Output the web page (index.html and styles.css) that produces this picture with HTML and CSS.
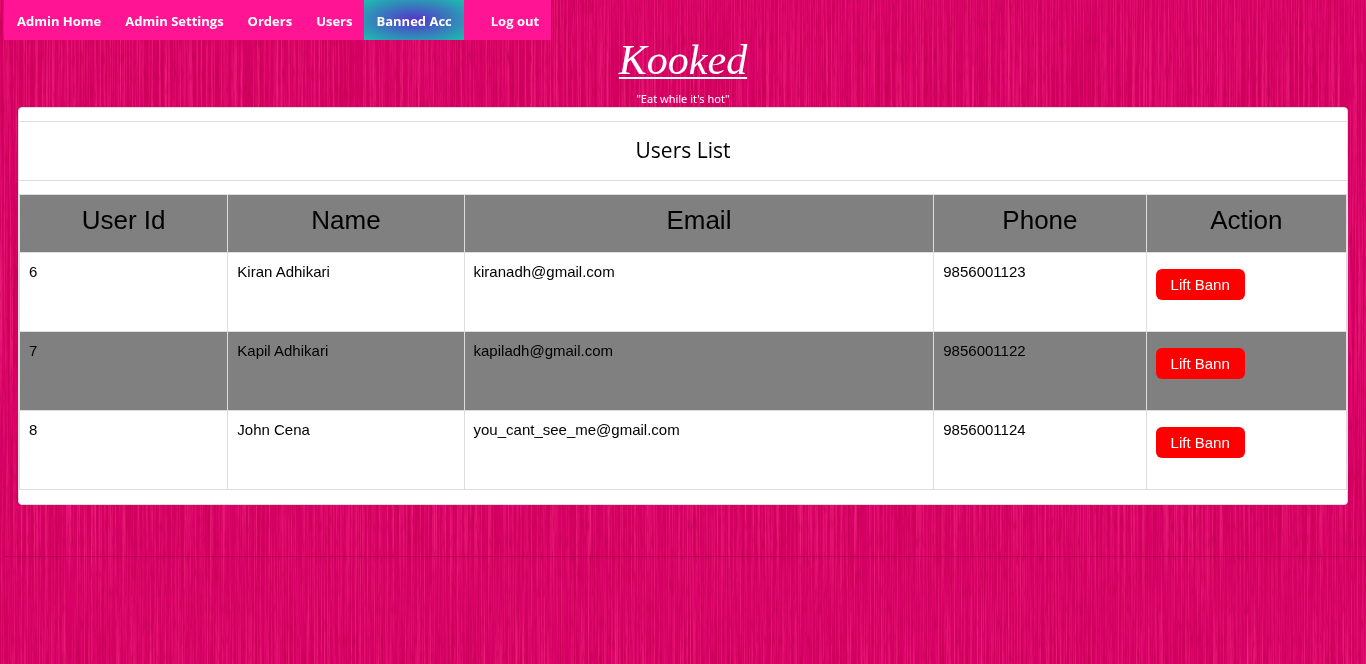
FILE: index.html
```html
<!DOCTYPE html>
<html lang="en">
<head>
<meta charset="utf-8">
<meta name="viewport" content="width=device-width, initial-scale=1">
<title>Kooked</title>
<link rel="stylesheet" href="styles.css">
</head>
<body>
<svg class="backdrop" aria-hidden="true">
  <filter id="grain" x="0" y="0" width="100%" height="100%" color-interpolation-filters="sRGB">
    <feTurbulence type="fractalNoise" baseFrequency="0.7 0.005" numOctaves="3" seed="11" result="long"/>
    <feColorMatrix in="long" type="matrix" values="0.2 0 0 0 0.755  0.3 0 0 0 -0.135  0.2 0 0 0 0.305  0 0 0 0 1" result="wood"/>
    <feTurbulence type="fractalNoise" baseFrequency="0.6 0.06" numOctaves="2" seed="3" result="fine"/>
    <feColorMatrix in="fine" type="matrix" values="0 0 0 0 0.7  0 0 0 0 0  0 0 0 0 0.28  1.4 0 0 0 -0.72"/>
    <feBlend in2="wood" mode="normal"/>
  </filter>
  <rect width="100%" height="100%" filter="url(#grain)"/>
  <rect class="seam" x="4" y="556" width="100%" height="1"/>
</svg>
<header>
  <nav>
    <ul class="menu">
      <li><a href="#">Admin Home</a></li>
      <li><a href="#">Admin Settings</a></li>
      <li><a href="#">Orders</a></li>
      <li><a href="#">Users</a></li>
      <li><a href="#" class="current" aria-current="page">Banned Acc</a></li>
      <li class="logout"><a href="#">Log out</a></li>
    </ul>
  </nav>
  <div class="brand">
    <a href="#" class="brand-name">Kooked</a>
    <p class="tagline">"Eat while it's hot"</p>
  </div>
</header>
<main class="card">
  <h1>Users List</h1>
  <table>
    <colgroup><col class="c-id"><col class="c-name"><col class="c-email"><col class="c-phone"><col class="c-action"></colgroup>
    <thead>
      <tr><th scope="col">User Id</th><th scope="col">Name</th><th scope="col">Email</th><th scope="col">Phone</th><th scope="col">Action</th></tr>
    </thead>
    <tbody>
      <tr><td>6</td><td>Kiran Adhikari</td><td>kiranadh@gmail.com</td><td>9856001123</td><td><button type="button">Lift Bann</button></td></tr>
      <tr><td>7</td><td>Kapil Adhikari</td><td>kapiladh@gmail.com</td><td>9856001122</td><td><button type="button">Lift Bann</button></td></tr>
      <tr><td>8</td><td>John Cena</td><td>you_cant_see_me@gmail.com</td><td>9856001124</td><td><button type="button">Lift Bann</button></td></tr>
    </tbody>
  </table>
</main>
</body>
</html>
```
FILE: styles.css
```css
* { box-sizing: border-box; }
body {
  margin: 0;
  background: #db0068;
  color: #000;
  font: 15px/22px "Liberation Sans", Arial, sans-serif;
}
.backdrop {
  position: fixed;
  inset: 0;
  z-index: -1;
  width: 100%;
  height: 100%;
}
.seam { fill: #800038; fill-opacity: 0.4; }
.menu {
  display: flex;
  width: fit-content;
  margin: 0 0 0 4px;
  padding: 0 0 0 1px;
  list-style: none;
  background: #ff1493;
}
.menu a {
  display: block;
  padding: 2px 12px 0;
  color: #fff;
  font: 700 13px/38px "Open Sans", "Noto Sans", sans-serif;
  text-decoration: none;
}
.menu .current { background: radial-gradient(#5533cc, #1cbfae); }
.menu .logout { margin-left: 15px; }
.brand {
  display: flex;
  flex-direction: column;
  align-items: center;
  gap: 11px;
}
.brand-name {
  color: #fff;
  font: italic 42px/40px "Liberation Serif", serif;
  text-decoration: underline 2px;
  text-underline-offset: 3px;
}
.tagline {
  margin: 0;
  color: #fff;
  font: 11px/16px "Noto Sans", sans-serif;
}
.card {
  margin: 0 18px;
  padding: 13px 0 14px;
  background: #fff;
  border: 1px solid #ddd;
  border-radius: 4px;
}
h1 {
  margin: 0 0 13px;
  padding-bottom: 2px;
  border: solid #ddd;
  border-width: 1px 0;
  font: 21px/56px "Open Sans", sans-serif;
  text-align: center;
}
table {
  width: 100%;
  table-layout: fixed;
  border-collapse: collapse;
}
.c-id { width: 15.7%; }
.c-name { width: 17.8%; }
.c-email { width: 35.4%; }
.c-phone { width: 16%; }
.c-action { width: 15.1%; }
th, td { border: 1px solid #ddd; padding: 8px 9px; }
th {
  height: 58px;
  font-size: 26px;
  font-weight: 400;
  line-height: 34px;
  vertical-align: top;
}
td { height: 79px; vertical-align: top; }
thead tr, tbody tr:nth-child(even) { background: #808080; }
button {
  display: block;
  margin-top: 8px;
  padding: 4px 15px;
  border: 0;
  border-radius: 6px;
  background: #f00;
  color: #fff;
  font: 15px/23px "Liberation Sans", Arial, sans-serif;
}
```
